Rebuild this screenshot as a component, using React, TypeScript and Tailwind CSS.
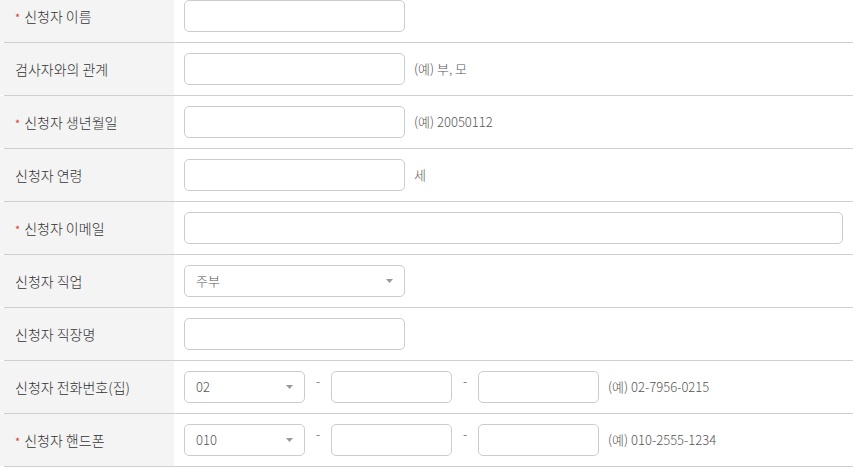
import type { ReactNode } from 'react';

const font = { fontFamily: '"Noto Sans CJK KR", "Noto Sans", sans-serif' };

function Row({ label, required, children }: { label: string; required?: boolean; children: ReactNode }) {
  return (
    <div className="flex border-b border-[#cfcfcf] h-[53px]">
      <div className="w-[170px] shrink-0 bg-[#f4f4f4] shadow-[-4px_0_0_#f4f4f4] flex items-center pl-[11px] text-[14px] font-light text-[#333]">
        {required && (
          <span className="text-[#e0402a] text-[11px] font-normal leading-none mr-[4px] mt-[3px]">*</span>
        )}
        <span>{label}</span>
      </div>
      <div className="flex-1 flex items-center pl-[10px] pr-[10px]">{children}</div>
    </div>
  );
}

function Input({ w = 'w-[221px]' }: { w?: string }) {
  return <div className={`${w} h-[32px] border border-[#cccccc] rounded-[5px] bg-white shrink-0`} />;
}

function Select({ value, w = 'w-[221px]' }: { value: string; w?: string }) {
  return (
    <div className={`${w} h-[32px] border border-[#cccccc] rounded-[5px] bg-white shrink-0 flex items-center justify-between pl-[11px] pr-[11px]`}>
      <span className="text-[13px] font-light text-[#555]">{value}</span>
      <svg width="7" height="4" viewBox="0 0 7 4">
        <path d="M0 0h7L3.5 4z" fill="#999" />
      </svg>
    </div>
  );
}

function Hint({ children }: { children: ReactNode }) {
  return <span className="ml-[9px] text-[13px] font-light text-[#555]">{children}</span>;
}

function Dash() {
  return <span className="w-[26px] text-center text-[12px] text-[#777] -mt-[12px]">-</span>;
}

export default function App() {
  return (
    <div className="bg-white w-[863px] h-[475px] overflow-hidden" style={font}>
      <div className="-mt-[10px] ml-[4px] mr-[10px]">
        <Row label="신청자 이름" required>
          <Input />
        </Row>
        <Row label="검사자와의 관계">
          <Input />
          <Hint>(예) 부, 모</Hint>
        </Row>
        <Row label="신청자 생년월일" required>
          <Input />
          <Hint>(예) 20050112</Hint>
        </Row>
        <Row label="신청자 연령">
          <Input />
          <Hint>세</Hint>
        </Row>
        <Row label="신청자 이메일" required>
          <Input w="flex-1" />
        </Row>
        <Row label="신청자 직업">
          <Select value="주부" />
        </Row>
        <Row label="신청자 직장명">
          <Input />
        </Row>
        <Row label="신청자 전화번호(집)">
          <Select value="02" w="w-[121px]" />
          <Dash />
          <Input w="w-[121px]" />
          <Dash />
          <Input w="w-[121px]" />
          <Hint>(예) 02-7956-0215</Hint>
        </Row>
        <Row label="신청자 핸드폰" required>
          <Select value="010" w="w-[121px]" />
          <Dash />
          <Input w="w-[121px]" />
          <Dash />
          <Input w="w-[121px]" />
          <Hint>(예) 010-2555-1234</Hint>
        </Row>
      </div>
    </div>
  );
}
